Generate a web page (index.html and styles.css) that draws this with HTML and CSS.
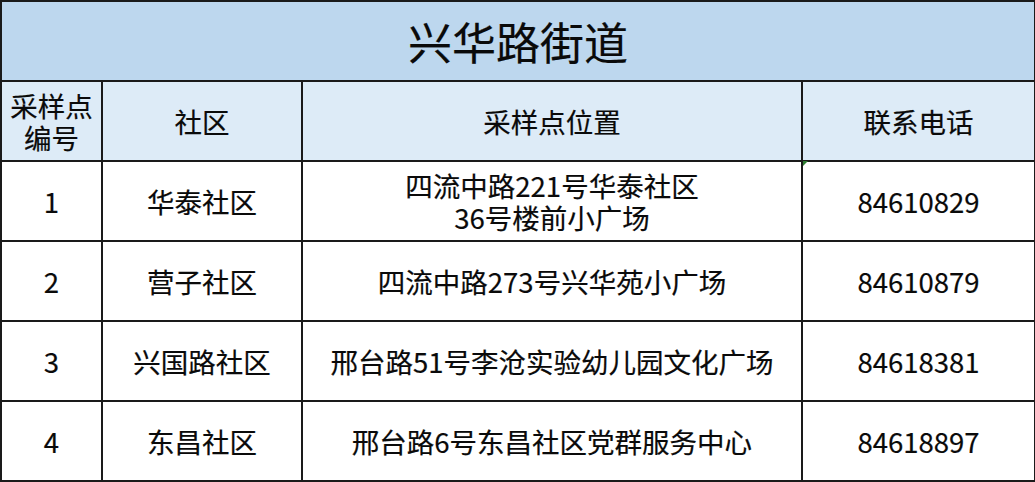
FILE: index.html
```html
<!DOCTYPE html>
<html lang="zh">
<head>
<meta charset="utf-8">
<link rel="stylesheet" href="styles.css">
</head>
<body>
<table class="sheet">
  <colgroup>
    <col class="c1"><col class="c2"><col class="c3"><col class="c4">
  </colgroup>
  <tr class="title-row"><td colspan="4">兴华路街道</td></tr>
  <tr class="head-row">
    <td class="tight">采样点<br>编号</td>
    <td>社区</td>
    <td>采样点位置</td>
    <td>联系电话</td>
  </tr>
  <tr>
    <td>1</td>
    <td>华泰社区</td>
    <td class="mark tight">四流中路221号华泰社区<br>36号楼前小广场</td>
    <td>84610829</td>
  </tr>
  <tr>
    <td>2</td>
    <td>营子社区</td>
    <td>四流中路273号兴华苑小广场</td>
    <td>84610879</td>
  </tr>
  <tr>
    <td>3</td>
    <td>兴国路社区</td>
    <td>邢台路51号李沧实验幼儿园文化广场</td>
    <td>84618381</td>
  </tr>
  <tr>
    <td>4</td>
    <td>东昌社区</td>
    <td>邢台路6号东昌社区党群服务中心</td>
    <td>84618897</td>
  </tr>
</table>
</body>
</html>
```

FILE: styles.css
```css
html, body {
  margin: 0;
  padding: 0;
  background: #ffffff;
}
.sheet {
  width: 1034px;
  border-collapse: collapse;
  table-layout: fixed;
  font-family: "Noto Sans CJK SC", "Noto Sans", sans-serif;
  color: #0a0a0a;
}
.c1 { width: 101px; }
.c2 { width: 200px; }
.c3 { width: 500px; }
.c4 { width: 233px; }
.sheet td {
  border: 2px solid #1a1a1a;
  height: 78px;
  padding: 0;
  text-align: center;
  vertical-align: middle;
  font-size: 27.5px;
  line-height: 32px;
  -webkit-text-stroke: 0.2px #0a0a0a;
}
.title-row td {
  background: #bdd7ee;
  font-size: 44px;
  line-height: 50px;
}
.head-row td {
  background: #ddebf7;
}
.mark {
  position: relative;
}
.mark::after {
  content: "";
  position: absolute;
  top: -1px;
  right: -7px;
  width: 0;
  height: 0;
  border-right: 5px solid transparent;
  border-top: 5px solid #2e7d32;
}
```
